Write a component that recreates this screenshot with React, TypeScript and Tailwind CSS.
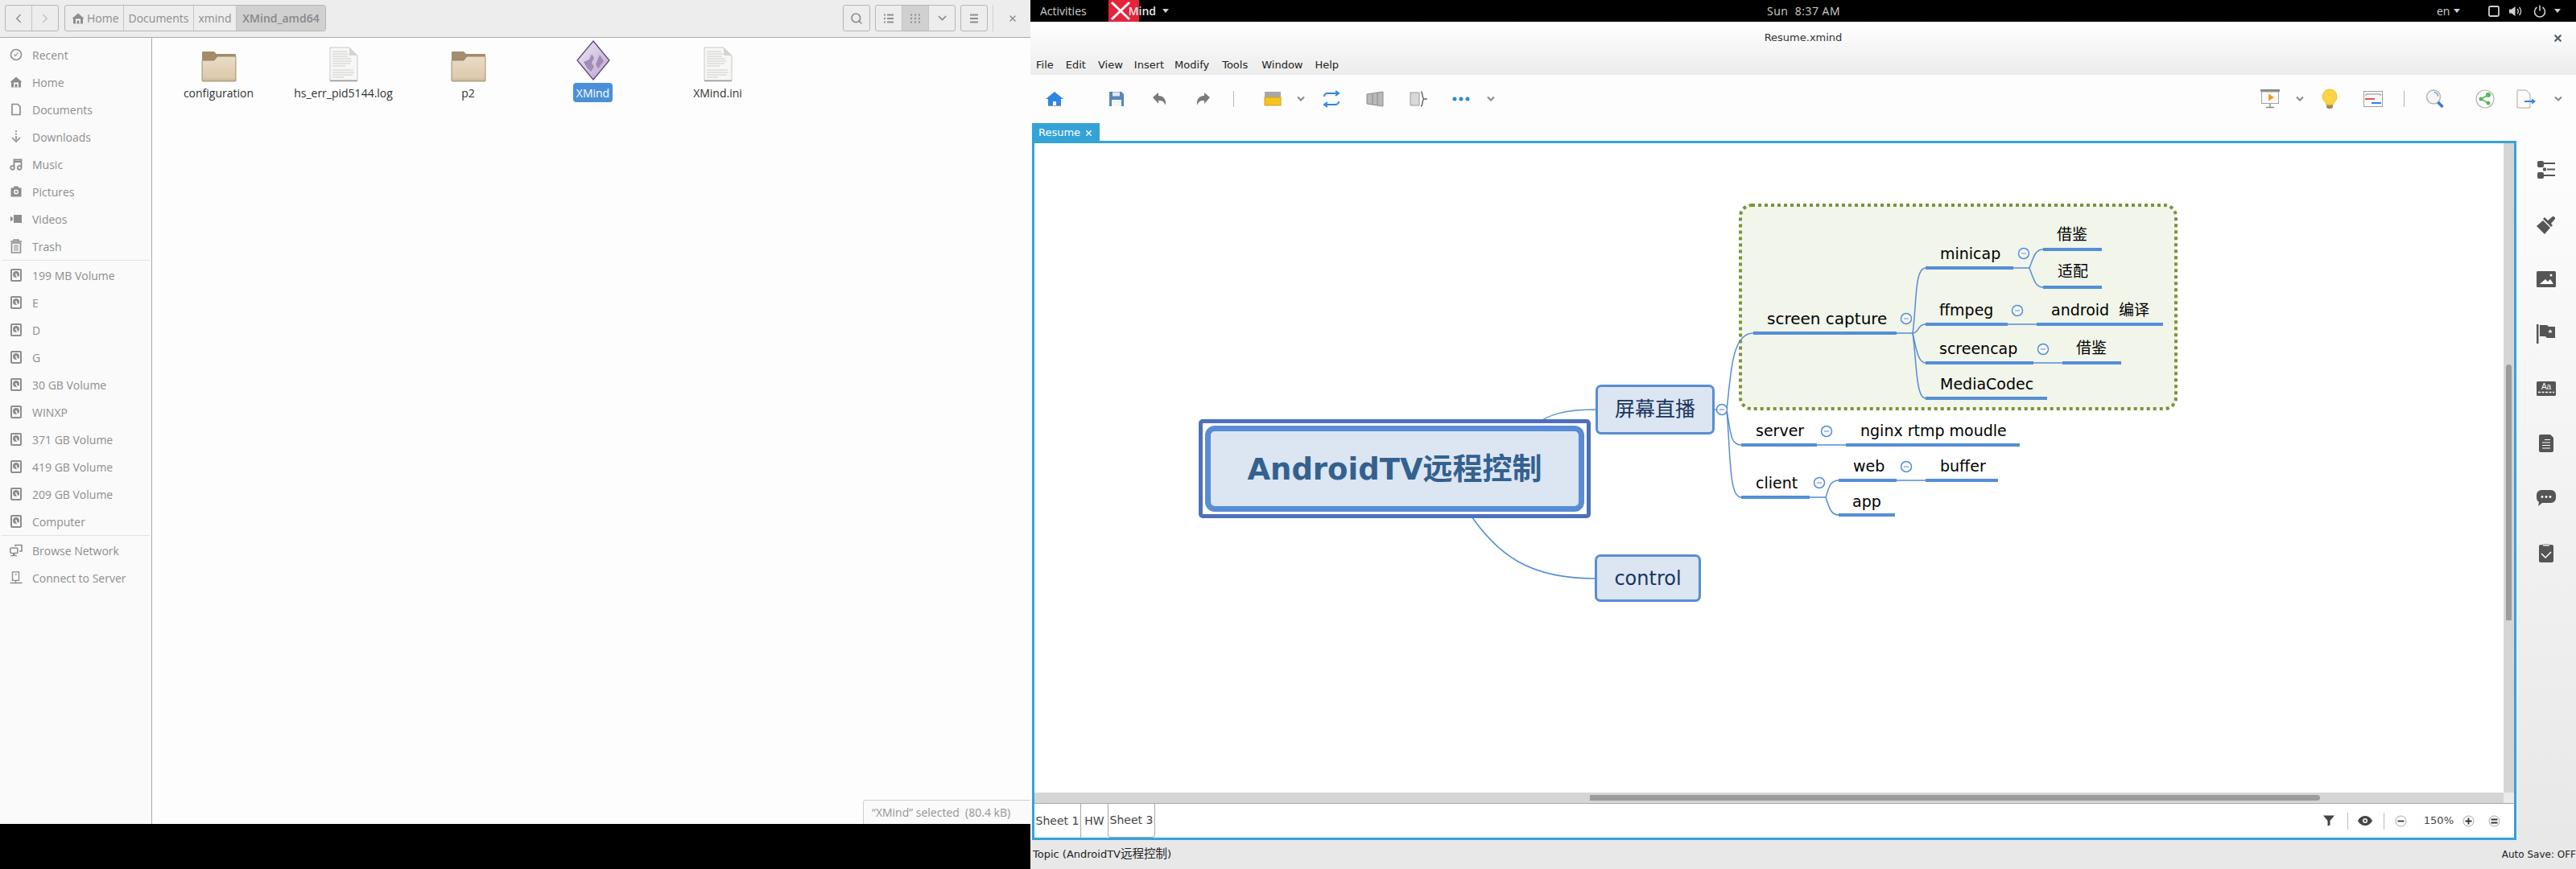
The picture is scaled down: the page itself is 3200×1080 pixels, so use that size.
import React from "react";
import { ChevronDown, ChevronLeft, ChevronRight, Search, X } from "lucide-react";

const sideGray = "#8b8e8f";

const Disk = () => (
  <svg width="14" height="16" viewBox="0 0 14 16">
    <rect x="1" y="1" width="12" height="14" rx="1" fill="none" stroke={sideGray} strokeWidth="2" />
    <circle cx="7" cy="7" r="4" fill={sideGray} />
    <path d="M7 8l4 5" stroke="#fff" strokeWidth="1.4" />
    <circle cx="7" cy="7" r="1" fill="#fff" />
  </svg>
);

const Glyph = ({ name }: { name: string }) => {
  const c = sideGray;
  switch (name) {
    case "recent":
      return (
        <svg width="16" height="16" viewBox="0 0 16 16">
          <circle cx="8" cy="8" r="6.5" fill="none" stroke={c} strokeWidth="1.6" />
          <path d="M5.5 7.5L7.5 9.5L10.5 5" fill="none" stroke={c} strokeWidth="1.1" />
        </svg>
      );
    case "home":
      return (
        <svg width="16" height="16" viewBox="0 0 16 16">
          <path d="M0.5 8L8 1.5L15.5 8L14 8L14 14.5H2V8Z" fill={c} />
          <path d="M5 8.5h6v6H9.5v-4h-3v4H5z" fill="#fafafa" />
        </svg>
      );
    case "docs":
      return (
        <svg width="16" height="16" viewBox="0 0 16 16">
          <path d="M3 1.5h7l3 3v10H3z" fill="none" stroke={c} strokeWidth="1.7" />
        </svg>
      );
    case "down":
      return (
        <svg width="16" height="16" viewBox="0 0 16 16">
          <path d="M8 0v2M8 3.5v2M8 7v5M3 9l5 5 5-5" fill="none" stroke={c} strokeWidth="1.6" />
        </svg>
      );
    case "music":
      return (
        <svg width="16" height="16" viewBox="0 0 16 16">
          <path d="M5.5 12V2.5h9V12M5.5 5h9" fill="none" stroke={c} strokeWidth="1.8" />
          <circle cx="3.5" cy="12.5" r="2.3" fill="none" stroke={c} strokeWidth="1.7" />
          <circle cx="12.2" cy="12.5" r="2.3" fill="none" stroke={c} strokeWidth="1.7" />
        </svg>
      );
    case "pics":
      return (
        <svg width="16" height="16" viewBox="0 0 16 16">
          <path d="M1.5 3.5h3L5.5 1.5h5l1 2h3v11h-13z" fill={c} />
          <circle cx="8" cy="8.5" r="3" fill="#fafafa" />
          <circle cx="8" cy="8.5" r="1.4" fill={c} />
        </svg>
      );
    case "video":
      return (
        <svg width="16" height="16" viewBox="0 0 16 16">
          <rect x="5" y="3" width="10" height="10" fill={c} />
          <path d="M1 4.5L4 7v2L1 11.5z" fill={c} />
        </svg>
      );
    case "trash":
      return (
        <svg width="16" height="18" viewBox="0 0 16 18">
          <path d="M1 3h14M5 2.5V1h6v1.500" fill="none" stroke={c} strokeWidth="1.4" />
          <path d="M2.500 5h11v12h-11z" fill="none" stroke={c} strokeWidth="1.6" />
          <path d="M6 7v8M8 7v8M10 7v8" stroke={c} strokeWidth="1" />
        </svg>
      );
    case "net":
      return (
        <svg width="16" height="16" viewBox="0 0 16 16">
          <rect x="0.800" y="5" width="9" height="6.500" rx="1" fill="none" stroke={c} strokeWidth="1.600" />
          <path d="M1 14h8v1.200H1zM4 11.500h2.500V14H4z" fill={c} />
          <path d="M7 3V1.500h8V9h-3" fill="none" stroke={c} strokeWidth="1.600" />
        </svg>
      );
    case "server":
      return (
        <svg width="16" height="16" viewBox="0 0 16 16">
          <rect x="3.500" y="0.800" width="8" height="10.500" fill="none" stroke={c} strokeWidth="1.300" />
          <rect x="7" y="3" width="1.600" height="1.600" fill={c} />
          <path d="M0.500 14.500h15M7.500 11.500v3" stroke={c} strokeWidth="1.300" />
        </svg>
      );
    default:
      return <Disk />;
  }
};

const places = [
  ["recent", "Recent"],
  ["home", "Home"],
  ["docs", "Documents"],
  ["down", "Downloads"],
  ["music", "Music"],
  ["pics", "Pictures"],
  ["video", "Videos"],
  ["trash", "Trash"],
];
const volumes = ["199 MB Volume", "E", "D", "G", "30 GB Volume", "WINXP", "371 GB Volume", "419 GB Volume", "209 GB Volume", "Computer"];

const SideRow = ({ icon, label }: { icon: string; label: string }) => (
  <div className="flex h-[34px] items-center">
    <div className="flex w-10 justify-center pr-[1px]">
      <Glyph name={icon} />
    </div>
    <span>{label}</span>
  </div>
);

const Folder = () => (
  <svg width="44" height="40" viewBox="0 0 44 40">
    <defs>
      <linearGradient id="fold" x1="0" y1="0" x2="0" y2="1">
        <stop offset="0" stopColor="#e9dcc7" />
        <stop offset="0.85" stopColor="#ddcaac" />
        <stop offset="1" stopColor="#c9b596" />
      </linearGradient>
    </defs>
    <path d="M1 3q0-1 1-1h14l3 3h23q1 0 1 1v8H1z" fill="#a58d6c" />
    <path d="M1 38V14q0-1 1-1h14l4-5h22q1 0 1 1v29q0 1-1 1H2q-1 0-1-1z" fill="url(#fold)" stroke="#8f7a5a" strokeWidth="0.800" />
  </svg>
);

const Doc = () => (
  <svg width="38" height="44" viewBox="0 0 38 44">
    <path d="M2 1h24l10 10v31H2z" fill="#f7f7f5" stroke="#c9c9c9" />
    <path d="M26 1v10h10z" fill="#d4d4d2" />
    <path
      d="M5 6h18M5 9h20M5 12h19M5 15h23M5 18h24M5 21h22M5 24h16M5 29h26M5 32h27M5 35h25M5 38h14"
      stroke="#cdcdcd"
      strokeWidth="1"
    />
    <path d="M2 42.500h34" stroke="#9a9a9a" strokeWidth="1.500" />
  </svg>
);

const Diamond = () => (
  <svg width="42" height="52" viewBox="0 0 42 52">
    <defs>
      <linearGradient id="dia" x1="0" y1="0" x2="1" y2="1">
        <stop offset="0" stopColor="#efe9f4" />
        <stop offset="1" stopColor="#b8a5cd" />
      </linearGradient>
    </defs>
    <path d="M21 1L41 25L21 49L1 25Z" fill="url(#dia)" stroke="#5a3d78" strokeWidth="1.200" />
    <path d="M9 27l7-3 3-7 3 5-3 6 3 5-4 6-5-5z" fill="#a08bb9" />
    <path d="M24 30l5-12 5 8-7 9z" fill="#a08bb9" />
  </svg>
);

const files = [
  { name: "configuration", icon: <Folder /> },
  { name: "hs_err_pid5144.log", icon: <Doc /> },
  { name: "p2", icon: <Folder /> },
  { name: "XMind", icon: <Diamond />, selected: true },
  { name: "XMind.ini", icon: <Doc /> },
];

const Nautilus = () => (
  <div className="flex h-[1024px] w-[1280px] flex-col font-['Open_Sans',sans-serif] text-[14px]">
    <div className="flex h-[47px] items-start border-b border-[#ababab] bg-[#ededed] pl-[6px] pt-[6px] text-[#8b8e8f]">
      <div className="flex h-[33px] w-[67px] rounded-[3px] border border-[#b6b6b3]">
        <div className="flex w-[33px] items-center justify-center border-r border-[#c4c4c2]">
          <ChevronLeft size={18} strokeWidth={2} />
        </div>
        <div className="flex flex-1 items-center justify-center text-[#c0c2c2]">
          <ChevronRight size={18} strokeWidth={2} />
        </div>
      </div>
      <div className="ml-[7px] flex h-[33px] w-[325px] overflow-hidden rounded-[3px] border border-[#b6b6b3]">
        <div className="flex w-[73px] items-center gap-[3px] border-r border-[#c4c4c2] pl-[8px]">
          <Glyph name="home" />
          <span>Home</span>
        </div>
        <div className="flex w-[87px] items-center justify-center border-r border-[#c4c4c2]">Documents</div>
        <div className="flex w-[53px] items-center justify-center border-r border-[#c4c4c2]">xmind</div>
        <div className="flex flex-1 items-center justify-center bg-[#d0d0d0] font-semibold text-[#85888a]">XMind_amd64</div>
      </div>
      <div className="ml-[642px] flex h-[33px] w-[34px] items-center justify-center rounded-[3px] border border-[#b6b6b3]">
        <Search size={16} strokeWidth={2.500} />
      </div>
      <div className="ml-[6px] flex h-[33px] w-[100px] overflow-hidden rounded-[3px] border border-[#b6b6b3]">
        <div className="flex w-[33px] items-center justify-center border-r border-[#c4c4c2]">
          <svg width="12" height="12" viewBox="0 0 12 12">
            <path d="M0 1.500h2M0 6h2M0 10.500h2M4 1.500h8M4 6h8M4 10.500h8" stroke="#8b8e8f" strokeWidth="2" />
          </svg>
        </div>
        <div className="flex w-[33px] items-center justify-center border-r border-[#c4c4c2] bg-[#d0d0d0]">
          <svg width="12" height="12" viewBox="0 0 12 12">
            <path d="M0 1.500h2M5 1.500h2M10 1.500h2M0 6h2M5 6h2M10 6h2M0 10.500h2M5 10.500h2M10 10.500h2" stroke="#8b8e8f" strokeWidth="2" />
          </svg>
        </div>
        <div className="flex flex-1 items-center justify-center">
          <ChevronDown size={17} strokeWidth={2.200} />
        </div>
      </div>
      <div className="ml-[6px] flex h-[33px] w-[34px] items-center justify-center rounded-[3px] border border-[#b6b6b3]">
        <svg width="12" height="12" viewBox="0 0 12 12">
          <path d="M1 1.500h10M1 6h10M1 10.500h10" stroke="#8b8e8f" strokeWidth="2" />
        </svg>
      </div>
      <div className="ml-[6px] h-[33px] w-px bg-[#d0d0d0]" />
      <div className="ml-[18px] flex h-[33px] items-center">
        <X size={12} strokeWidth={3} />
      </div>
    </div>
    <div className="relative flex flex-1">
      <div className="w-[189px] border-r border-[#a9a9a9] bg-[#fafafa] pt-1 text-[#8b8e8f]">
        {places.map(([icon, label]) => (
          <SideRow key={label} icon={icon} label={label} />
        ))}
        <div className="mx-[2px] h-px bg-[#e2e2e2]" />
        <div className="h-px" />
        {volumes.map((v) => (
          <SideRow key={v} icon="disk" label={v} />
        ))}
        <div className="mx-[2px] h-px bg-[#e2e2e2]" />
        <div className="h-px" />
        <SideRow icon="net" label="Browse Network" />
        <SideRow icon="server" label="Connect to Server" />
      </div>
      <div className="flex flex-1 items-start bg-[#fdfdfd] pl-[5px] pt-[9px]">
        {files.map((f) => (
          <div key={f.name} className="flex w-[155px] flex-col items-center text-[#2e3436]">
            <div className="flex h-[46px] items-end">{f.icon}</div>
            <span className={f.selected ? "mt-[1px] flex h-[24px] items-center rounded-[4px] bg-[#4a90d9] px-[4px] text-white" : "mt-[1px] flex h-[24px] items-center px-[4px]"}>
              {f.name}
            </span>
          </div>
        ))}
      </div>
      <div className="absolute bottom-0 right-0 flex h-[30px] w-[208px] items-center rounded-tl-[4px] border-l border-t border-[#cfcfcf] bg-[#fafafa] pl-[10px] text-[#929595]">
        “XMind” selected&nbsp;&nbsp;(80.4 kB)
      </div>
    </div>
  </div>
);

const ToolHome = () => (
  <svg width="24" height="24" viewBox="0 0 24 24">
    <path d="M1 12L12 3l11 9h-3v9h-6v-6h-4v6H4v-9z" fill="#2f86e0" />
    <path d="M4 20.500h16" stroke="#999" strokeWidth="1" />
  </svg>
);
const ToolSave = () => (
  <svg width="22" height="22" viewBox="0 0 22 22">
    <path d="M2 2h15l3 3v15H2z" fill="#5a86b8" />
    <rect x="6" y="2.500" width="9" height="5" fill="#dfe8f2" />
    <rect x="5" y="12" width="12" height="8" fill="#f2f5f8" />
  </svg>
);
const ToolUndo = ({ flip }: { flip?: boolean }) => (
  <svg width="22" height="22" viewBox="0 0 22 22" className={flip ? "-scale-x-100" : ""}>
    <path d="M3 9l7-6v4c6 0 10 4 9 12-2-5-4-6-9-6v4z" fill="#7b7b7b" />
  </svg>
);
const ToolTopic = () => (
  <svg width="24" height="22" viewBox="0 0 24 22">
    <rect x="2" y="2" width="20" height="7" fill="#a8a8a8" />
    <rect x="2" y="9" width="20" height="10" fill="#f7c41f" stroke="#c9a227" />
  </svg>
);
const ToolSwap = () => (
  <svg width="24" height="22" viewBox="0 0 24 22">
    <path d="M3 8a4 4 0 014-4h12M17 1l4 3-4 3M21 14a4 4 0 01-4 4H5M7 15l-4 3 4 3" fill="none" stroke="#2f86e0" strokeWidth="2" />
  </svg>
);
const ToolPersp = () => (
  <svg width="24" height="22" viewBox="0 0 24 22">
    <path d="M2 5l20-3v18L2 17z" fill="#b9b9b9" stroke="#8a8a8a" />
    <path d="M9 4v14M15 3v16" stroke="#8a8a8a" />
  </svg>
);
const ToolBracket = () => (
  <svg width="24" height="22" viewBox="0 0 24 22">
    <path d="M2 3h11v16H2z" fill="#d8d8d8" stroke="#9a9a9a" />
    <path d="M15 2c3 0 1 8 4 9-3 1-1 9-4 9" fill="none" stroke="#666" strokeWidth="1.500" />
    <path d="M20 11h3" stroke="#666" strokeWidth="1.500" />
  </svg>
);
const ToolDots = () => (
  <svg width="24" height="8" viewBox="0 0 24 8">
    <circle cx="4" cy="4" r="2.500" fill="#2f86e0" />
    <circle cx="12" cy="4" r="2.500" fill="#2f86e0" />
    <circle cx="20" cy="4" r="2.500" fill="#2f86e0" />
  </svg>
);
const ToolChev = () => (
  <svg width="10" height="8" viewBox="0 0 10 8">
    <path d="M1 1.500l4 4 4-4" fill="none" stroke="#888" strokeWidth="2" />
  </svg>
);
const ToolPresent = () => (
  <svg width="24" height="24" viewBox="0 0 24 24">
    <rect x="0" y="0" width="24" height="3" fill="#8a8a8a" />
    <rect x="1.500" y="3" width="21" height="14.500" fill="#fbfbfb" stroke="#a0a0a0" />
    <path d="M10 5.500l7 4.500-7 4.500z" fill="#f39c1f" />
    <path d="M12 18v4M7 22.500h10" stroke="#8a8a8a" strokeWidth="1.500" />
  </svg>
);
const ToolBulb = () => (
  <svg width="20" height="26" viewBox="0 0 20 26">
    <path d="M10 1a9 9 0 00-6 15.500c1 1 1.500 2 1.500 3.500h9c0-1.500.5-2.500 1.500-3.500A9 9 0 0010 1z" fill="#fdd445" stroke="#f0b91f" />
    <path d="M6 20.500h8v3l-2 1.500H8l-2-1.500z" fill="#9a8a5c" />
  </svg>
);
const ToolGantt = () => (
  <svg width="24" height="20" viewBox="0 0 24 20">
    <rect x="0.500" y="0.500" width="23" height="19" fill="#fbfbfb" stroke="#a0a0a0" />
    <path d="M3 6V4h18v2" fill="none" stroke="#888" />
    <rect x="2" y="9" width="12" height="2" fill="#f05050" />
    <rect x="10" y="14" width="12" height="2" fill="#2f86e0" />
  </svg>
);
const ToolSearch = () => (
  <svg width="24" height="24" viewBox="0 0 24 24">
    <circle cx="10" cy="9.500" r="8.500" fill="#f6f6f6" stroke="#b5b5b5" strokeWidth="1.500" />
    <path d="M11 3.500a6 6 0 014.500 5" fill="none" stroke="#2f86e0" strokeWidth="1.200" />
    <path d="M15.500 16l6 6" stroke="#2f7fd6" strokeWidth="3.500" />
  </svg>
);
const ToolShare = () => (
  <svg width="24" height="24" viewBox="0 0 24 24">
    <circle cx="12" cy="12" r="11" fill="#fbfbfb" stroke="#b5b5b5" strokeWidth="1.200" />
    <path d="M16 7l-9 5 9 5" fill="none" stroke="#5cb85c" strokeWidth="1.500" />
    <circle cx="16" cy="7" r="3" fill="#5cb85c" />
    <circle cx="7" cy="12" r="2.500" fill="#5cb85c" />
    <circle cx="16" cy="17" r="2.500" fill="#5cb85c" />
  </svg>
);
const ToolExport = () => (
  <svg width="24" height="24" viewBox="0 0 24 24">
    <path d="M1 1h11l5 5v17H1z" fill="#fbfbfb" stroke="#a8a8a8" />
    <path d="M10 15h10" stroke="#2f86e0" strokeWidth="2" />
    <path d="M19 11.500l5 3.500-5 3.500z" fill="#2f86e0" />
  </svg>
);

const Sep = ({ className }: { className: string }) => <div className={`h-[20px] w-px bg-[#b5b5b5] ${className}`} />;

const topics = [
  { x: 2195, y: 396, t: "screen capture", s: 20 },
  { x: 2410, y: 315, t: "minicap" },
  { x: 2555, y: 291, t: "借鉴" },
  { x: 2556, y: 337, t: "适配" },
  { x: 2409, y: 385, t: "ffmpeg" },
  { x: 2548, y: 385, t: "android" },
  { x: 2632, y: 385, t: "编译" },
  { x: 2409, y: 433, t: "screencap" },
  { x: 2579, y: 432, t: "借鉴" },
  { x: 2410, y: 477, t: "MediaCodec" },
  { x: 2181, y: 535, t: "server" },
  { x: 2311, y: 535, t: "nginx rtmp moudle" },
  { x: 2181, y: 600, t: "client" },
  { x: 2302, y: 579, t: "web" },
  { x: 2410, y: 579, t: "buffer" },
  { x: 2301, y: 623, t: "app" },
];

const bars = [
  [2178, 2356, 414],
  [2392, 2501, 333],
  [2538, 2611, 310],
  [2538, 2611, 357],
  [2392, 2494, 403],
  [2530, 2687, 403],
  [2392, 2526, 451],
  [2562, 2635, 451],
  [2392, 2543, 495],
  [2163, 2257, 553],
  [2293, 2509, 553],
  [2163, 2248, 618],
  [2284, 2356, 597],
  [2392, 2482, 597],
  [2284, 2354, 640],
];

const links = [
  "M1905 529C1925 514 1945 509 1982 509",
  "M1824 636C1860 690 1900 719 1981 719",
  "M2130 509H2145",
  "M2145 509C2150 470 2150 414 2178 414",
  "M2145 509C2150 540 2150 553 2163 553",
  "M2145 509C2150 570 2148 618 2163 618",
  "M2356 414H2376",
  "M2376 414C2381 380 2378 333 2392 333",
  "M2376 414C2384 414 2382 403 2392 403",
  "M2376 414C2380 430 2382 451 2392 451",
  "M2376 414C2381 450 2380 495 2392 495",
  "M2501 333H2521",
  "M2521 333C2526 320 2528 310 2538 310",
  "M2521 333C2526 346 2528 357 2538 357",
  "M2494 403H2530",
  "M2526 451H2562",
  "M2257 553H2293",
  "M2248 618H2268",
  "M2268 618C2272 605 2274 597 2284 597",
  "M2268 618C2272 630 2274 640 2284 640",
  "M2356 597H2392",
];

const dots = [
  [2139, 509],
  [2368, 396],
  [2514, 315],
  [2506, 386],
  [2538, 434],
  [2269, 536],
  [2260, 600],
  [2368, 580],
];

const MindMap = () => (
  <div className="relative flex-1 overflow-hidden bg-white font-['DejaVu_Sans','Noto_Sans_CJK_SC',sans-serif]">
    <svg className="absolute left-0 top-0" width="1825" height="807" viewBox="1285 178 1825 807">
      <rect x="2162" y="255" width="541" height="253" rx="14" fill="#f1f5ea" stroke="#7b9339" strokeWidth="4" strokeDasharray="4 4" />
      {links.map((d) => (
        <path key={d} d={d} fill="none" stroke="#558ed5" strokeWidth="1.500" />
      ))}
      {bars.map(([a, b, y]) => (
        <rect key={`${a}-${y}`} x={a} y={y - 2} width={b - a} height="4" fill="#558ed5" />
      ))}
      {dots.map(([x, y]) => (
        <g key={`${x}-${y}`}>
          <circle cx={x} cy={y} r="6.500" fill="#f6f8fb" stroke="#558ed5" strokeWidth="1.500" />
          <path d={`M${x - 3} ${y}h6`} stroke="#a3abd0" strokeWidth="1.500" />
        </g>
      ))}
    </svg>
    <div className="absolute left-[204px] top-[343px] flex h-[123px] w-[487px] rounded-[5px] border-[5px] border-[#4f6fbb] bg-white p-[3px]">
      <div className="flex flex-1 items-center justify-center rounded-[12px] border-[7px] border-[#588dd5] bg-[#dce5f2] pt-[2px] text-[37px] font-bold text-[#33618f]">
        AndroidTV远程控制
      </div>
    </div>
    <div className="absolute left-[697px] top-[300px] flex h-[62px] w-[148px] items-center justify-center rounded-[7px] border-[3px] border-[#588dd5] bg-[#dce5f2] text-[25px] text-[#17365d]">
      屏幕直播
    </div>
    <div className="absolute left-[696px] top-[511px] flex h-[59px] w-[132px] items-center justify-center rounded-[7px] border-[3px] border-[#588dd5] bg-[#dce5f2] text-[24px] text-[#17365d]">
      control
    </div>
    {topics.map((n) => (
      <span
        key={`${n.t}-${n.x}`}
        className="absolute -translate-y-1/2 whitespace-nowrap text-black"
        style={{ left: n.x - 1285, top: n.y - 178, fontSize: n.s ?? 19 }}
      >
        {n.t}
      </span>
    ))}
  </div>
);

const RailIcon = ({ i }: { i: number }) => {
  const c = "#555";
  const icons = [
    <svg width="24" height="24" viewBox="0 0 24 24" key="0">
      <rect x="1" y="1" width="8" height="8" rx="2" fill={c} />
      <rect x="1" y="15" width="8" height="8" rx="2" fill={c} />
      <rect x="8" y="9.500" width="4" height="4" rx="1" fill={c} />
      <path d="M9 4h14M13 11.500h10M9 19h14" stroke={c} strokeWidth="1.800" />
    </svg>,
    <svg width="26" height="26" viewBox="0 0 26 26" key="1">
      <path d="M1 15l8-7 9 9-7 8z" fill={c} />
      <path d="M10 6l2-2 10 10-2 2z" fill={c} transform="translate(-1 0)" />
      <path d="M14 9l7-6a2.500 2.500 0 013 3l-6 7z" fill={c} />
    </svg>,
    <svg width="24" height="20" viewBox="0 0 24 20" key="2">
      <rect width="24" height="20" rx="1.500" fill={c} />
      <path d="M4 16l7-6 3 3 3-3 4 6z" fill="#fff" />
      <circle cx="18" cy="5" r="1.500" fill="#fff" />
    </svg>,
    <svg width="24" height="24" viewBox="0 0 24 24" key="3">
      <rect x="0" y="0" width="2.500" height="24" fill={c} />
      <path d="M4 1h9l2 2h8v14H13l-2-2H4z" fill={c} />
      <path d="M17 6l.8 2h2l-1.600 1.300.6 2-1.800-1.200-1.800 1.200.6-2L14.200 8h2z" fill="#fff" />
    </svg>,
    <svg width="24" height="18" viewBox="0 0 24 18" key="4">
      <rect width="24" height="18" rx="1.500" fill={c} />
      <text x="12" y="10" textAnchor="middle" fontSize="10" fill="#fff" fontFamily="Liberation Sans, sans-serif">Aa</text>
      <path d="M2 13.500h20" stroke="#fff" strokeWidth="1.500" strokeDasharray="3 1.500" />
    </svg>,
    <svg width="18" height="22" viewBox="0 0 18 22" key="5">
      <path d="M2 0h12l4 4v16a2 2 0 01-2 2H2a2 2 0 01-2-2V2a2 2 0 012-2z" fill={c} />
      <path d="M4 10h10M4 13.500h10M4 17h10M7 6.500h7" stroke="#fff" strokeWidth="1" />
    </svg>,
    <svg width="24" height="20" viewBox="0 0 24 20" key="6">
      <path d="M6 0h12a6 6 0 016 6v4a6 6 0 01-6 6H7l-5 4 1-5a6 6 0 01-3-5V6a6 6 0 016-6z" fill={c} />
      <circle cx="7" cy="8.500" r="1.400" fill="#fff" />
      <circle cx="12" cy="8.500" r="1.400" fill="#fff" />
      <circle cx="17" cy="8.500" r="1.400" fill="#fff" />
    </svg>,
    <svg width="18" height="24" viewBox="0 0 18 24" key="7">
      <path d="M2 2h3V1h8v1h3a2 2 0 012 2v18a2 2 0 01-2 2H2a2 2 0 01-2-2V4a2 2 0 012-2z" fill={c} />
      <path d="M5 1.500h8v2H5z" fill="#eee" />
      <path d="M3 13l5 5 7-7" fill="none" stroke="#fff" strokeWidth="1.500" />
    </svg>,
  ];
  return icons[i];
};

const XMindWindow = () => (
  <div className="flex h-[1080px] w-[1920px] flex-col bg-[#fdfdfd] font-['DejaVu_Sans','Noto_Sans_CJK_SC',sans-serif]">
    <div className="flex h-[27px] items-center bg-black font-['Open_Sans',sans-serif] text-[14px] text-[#cfcfcf]">
      <span className="ml-[12px]">Activities</span>
      <div className="ml-[27px] flex h-[27px] items-center">
        <svg width="38" height="27" viewBox="0 0 38 27">
          <rect width="38" height="27" fill="#e3243b" />
          <path d="M4 3L26 24M26 3L4 24" stroke="#fff" strokeWidth="3" fill="none" />
        </svg>
        <span className="-ml-[13px] font-semibold text-[#e6e6e6]">Mind</span>
        <div className="ml-[8px] h-0 w-0 border-x-[4px] border-t-[5px] border-x-transparent border-t-[#cfcfcf]" />
      </div>
      <span className="ml-[743px] tracking-[0.5px]">Sun&nbsp;&nbsp;8:37 AM</span>
      <span className="ml-[741px]">en</span>
      <div className="ml-[5px] h-0 w-0 border-x-[4px] border-t-[5px] border-x-transparent border-t-[#cfcfcf]" />
      <svg className="ml-[35px]" width="14" height="14" viewBox="0 0 14 14">
        <rect x="1" y="1" width="12" height="12" rx="1.500" fill="none" stroke="#cfcfcf" strokeWidth="1.800" />
      </svg>
      <svg className="ml-[12px]" width="16" height="14" viewBox="0 0 16 14">
        <path d="M0 4.500h3L7.500 1v12L3 9.500H0z" fill="#cfcfcf" />
        <path d="M10 4a4 4 0 010 6M12.500 2a7 7 0 010 10" fill="none" stroke="#cfcfcf" strokeWidth="1.300" />
      </svg>
      <svg className="ml-[14px]" width="16" height="16" viewBox="0 0 16 16">
        <path d="M4.500 3a6.500 6.500 0 107 0M8 0.500v7" fill="none" stroke="#cfcfcf" strokeWidth="1.600" />
      </svg>
      <div className="ml-[10px] h-0 w-0 border-x-[4px] border-t-[5px] border-x-transparent border-t-[#cfcfcf]" />
    </div>

    <div className="h-[66px] rounded-t-[6px] bg-linear-to-b from-white to-[#ececec] text-[13px] text-[#222]">
      <div className="flex h-[40px] items-center pr-[16px]">
        <span className="ml-[892px] w-[136px] text-center text-[#333]">Resume.xmind</span>
        <X className="ml-auto text-[#4b5a66]" size={13} strokeWidth={4} />
      </div>
      <div className="flex h-[26px] items-start pt-[4px]">
        <span className="ml-[2px] px-[5px]">File</span>
        <span className="ml-[5px] px-[5px]">Edit</span>
        <span className="ml-[5px] px-[5px]">View</span>
        <span className="ml-[4px] px-[5px]">Insert</span>
        <span className="ml-[3px] px-[5px]">Modify</span>
        <span className="ml-[6px] px-[5px]">Tools</span>
        <span className="ml-[7px] px-[5px]">Window</span>
        <span className="ml-[5px] px-[5px]">Help</span>
      </div>
    </div>

    <div className="flex h-[60px] items-center pr-[17px]">
      <div className="ml-[18px] flex w-6 justify-center"><ToolHome /></div>
      <div className="ml-[53px] flex w-6 justify-center"><ToolSave /></div>
      <div className="ml-[29px] flex w-6 justify-center"><ToolUndo /></div>
      <div className="ml-[31px] flex w-6 justify-center"><ToolUndo flip /></div>
      <Sep className="ml-[25px]" />
      <div className="ml-[36px] flex w-6 justify-center"><ToolTopic /></div>
      <div className="ml-[18px]"><ToolChev /></div>
      <div className="ml-[21px] flex w-6 justify-center"><ToolSwap /></div>
      <div className="ml-[30px] flex w-6 justify-center"><ToolPersp /></div>
      <div className="ml-[30px] flex w-6 justify-center"><ToolBracket /></div>
      <div className="ml-[29px] flex w-6 justify-center"><ToolDots /></div>
      <div className="ml-[20px]"><ToolChev /></div>

      <div className="ml-auto flex w-6 justify-center"><ToolPresent /></div>
      <div className="ml-[20px]"><ToolChev /></div>
      <div className="ml-[20px] flex w-6 justify-center"><ToolBulb /></div>
      <div className="ml-[30px] flex w-6 justify-center"><ToolGantt /></div>
      <Sep className="ml-[26px]" />
      <div className="ml-[26px] flex w-6 justify-center"><ToolSearch /></div>
      <div className="ml-[38px] flex w-6 justify-center"><ToolShare /></div>
      <div className="ml-[27px] flex w-6 justify-center"><ToolExport /></div>
      <div className="ml-[23px]"><ToolChev /></div>
    </div>

    <div className="flex h-[22px] pl-[2px]">
      <div className="flex w-[84px] items-center justify-between bg-[#34a3d8] px-[8px] pt-[2px] text-[13px] text-white">
        <span>Resume</span>
        <X size={11} strokeWidth={3} />
      </div>
    </div>

    <div className="flex h-[869px]">
      <div className="ml-[2px] flex w-[1844px] flex-col border-[3px] border-[#34a3d8]">
        <div className="flex flex-1">
          <MindMap />
          <div className="w-[13px] bg-[#d5d5d5]">
            <div className="ml-[3px] mt-[275px] h-[318px] w-[7px] rounded-t-full bg-[#9b9c9e]" />
          </div>
        </div>
        <div className="flex h-[13px]">
          <div className="flex flex-1 items-center bg-[#d5d5d5]">
            <div className="ml-[690px] h-[7px] w-[907px] rounded-r-full bg-[#9b9c9e]" />
          </div>
          <div className="w-[13px] bg-[#ebebeb]" />
        </div>
        <div className="flex h-[43px] items-center border-t border-[#a8a8a8] bg-white text-[14px] text-[#444]">
          <div className="flex h-full w-[58px] items-center justify-center border-r border-[#a8a8a8]">Sheet 1</div>
          <div className="flex h-full w-[33px] items-center justify-center">HW</div>
          <div className="-mt-px flex h-[42px] w-[59px] items-center justify-center rounded-b-[4px] border-x border-b border-[#a8a8a8] bg-white">
            Sheet 3
          </div>
          <div className="ml-auto flex items-center pr-[17px] text-[#444]">
            <svg width="16" height="14" viewBox="0 0 16 14">
              <path d="M1 0.500h14L9.500 7v5.500l-3 1V7z" fill="#444" />
            </svg>
            <div className="ml-[15px] h-[21px] w-px bg-[#bcbcbc]" />
            <svg className="ml-[12px]" width="18" height="12" viewBox="0 0 18 12">
              <path d="M0 6c4-8 14-8 18 0-4 8-14 8-18 0z" fill="#444" />
              <circle cx="9" cy="6" r="3" fill="#fff" />
              <circle cx="9" cy="6" r="1.500" fill="#444" />
            </svg>
            <div className="ml-[14px] h-[21px] w-px bg-[#bcbcbc]" />
            <svg className="ml-[13px]" width="15" height="15" viewBox="0 0 15 15">
              <circle cx="7.500" cy="7.500" r="6.500" fill="none" stroke="#aaa" />
              <path d="M3.500 7.500h8" stroke="#333" strokeWidth="1.800" />
            </svg>
            <span className="ml-[21px] text-[13px]">150%</span>
            <svg className="ml-[11px]" width="15" height="15" viewBox="0 0 15 15">
              <circle cx="7.500" cy="7.500" r="6.500" fill="none" stroke="#aaa" />
              <path d="M3.500 7.500h8M7.500 3.500v8" stroke="#333" strokeWidth="1.800" />
            </svg>
            <svg className="ml-[17px]" width="15" height="15" viewBox="0 0 15 15">
              <circle cx="7.500" cy="7.500" r="6.500" fill="none" stroke="#aaa" />
              <path d="M3.500 5.500h8M3.500 9.500h8" stroke="#333" strokeWidth="1.800" />
            </svg>
          </div>
        </div>
      </div>
      <div className="flex w-[74px] flex-col items-center bg-linear-to-b from-[#fdfdfd] to-[#e8e8e8] pt-[2px]">
        {[0, 1, 2, 3, 4, 5, 6, 7].map((i) => (
          <div key={i} className="flex h-[68px] items-center justify-center">
            <RailIcon i={i} />
          </div>
        ))}
      </div>
    </div>

    <div className="flex h-[36px] items-center justify-between whitespace-nowrap bg-[#e8e8e8] pl-[3px] text-[13px] text-[#222]">
      <span>
        Topic (AndroidTV<span className="text-[14.5px]">远程控制</span>)
      </span>
      <span className="text-[12px]">Auto Save: OFF</span>
    </div>
  </div>
);

export default function App() {
  return (
    <div className="flex h-[1080px] w-[3200px] overflow-hidden bg-black">
      <div className="w-[1280px]">
        <Nautilus />
      </div>
      <XMindWindow />
    </div>
  );
}
